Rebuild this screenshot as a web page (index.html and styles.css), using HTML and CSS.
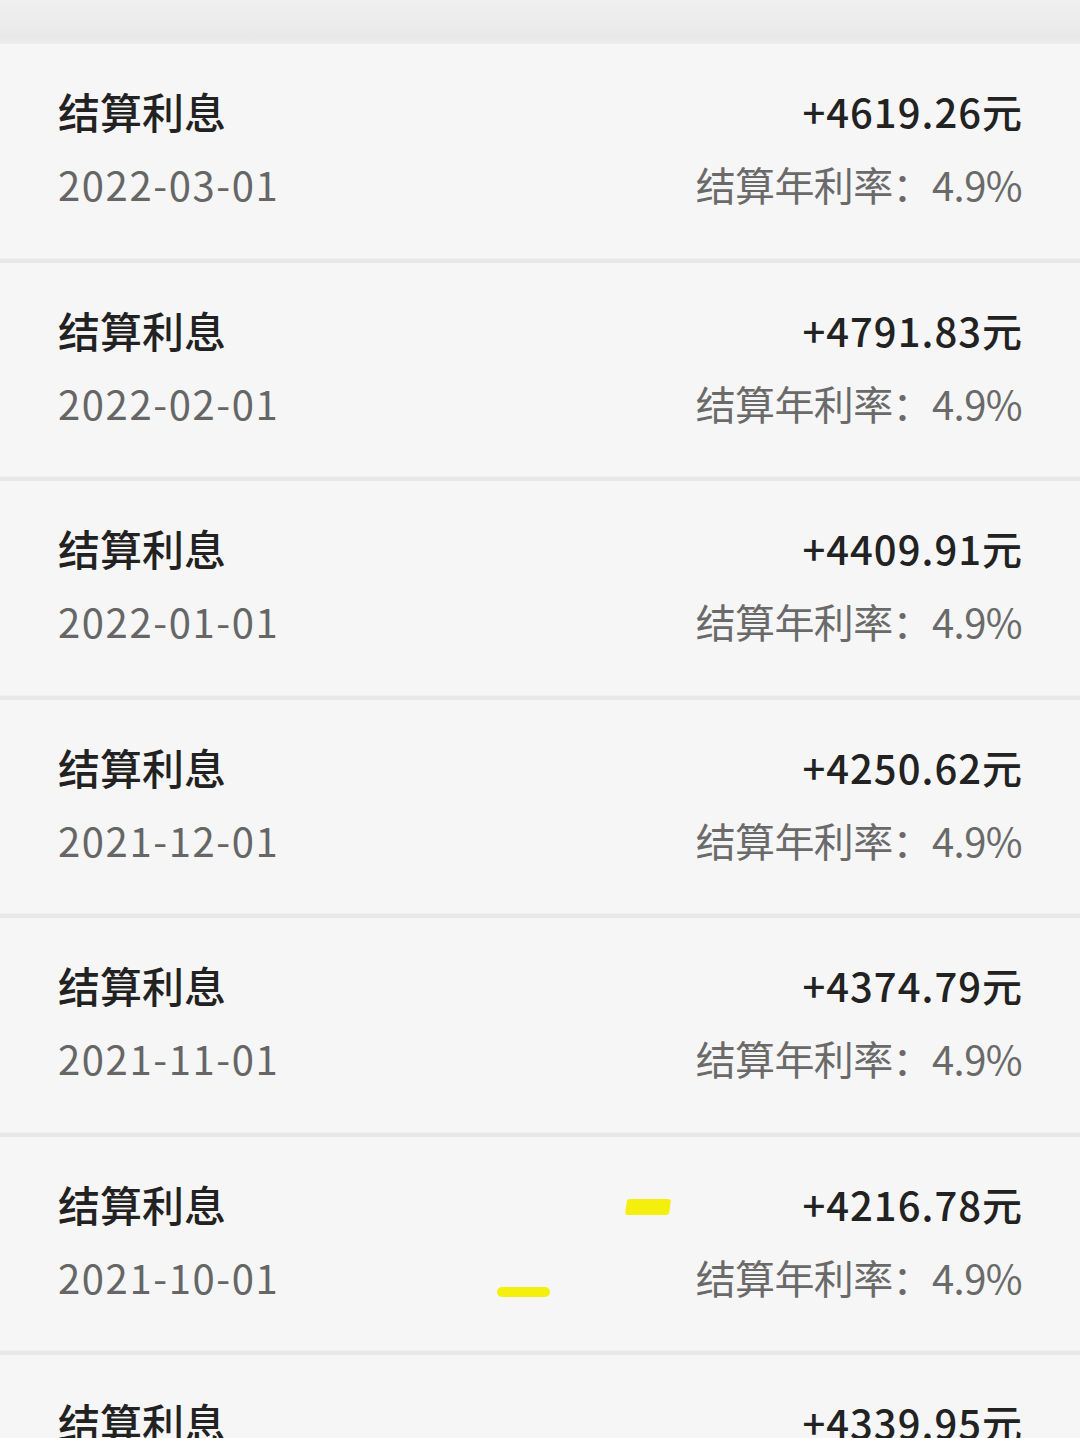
FILE: index.html
```html
<!DOCTYPE html>
<html lang="zh-CN">
<head>
<meta charset="utf-8">
<title>结算利息</title>
<link rel="stylesheet" href="styles.css">
</head>
<body>
<div class="page">
  <div class="topband"></div>
  <ul class="list">
    <li class="row">
      <div class="left"><div class="title">结算利息</div><div class="date">2022-03-01</div></div>
      <div class="right"><div class="amount">+4619.26元</div><div class="rate">结算年利率：4.9%</div></div>
    </li>
    <li class="row">
      <div class="left"><div class="title">结算利息</div><div class="date">2022-02-01</div></div>
      <div class="right"><div class="amount">+4791.83元</div><div class="rate">结算年利率：4.9%</div></div>
    </li>
    <li class="row">
      <div class="left"><div class="title">结算利息</div><div class="date">2022-01-01</div></div>
      <div class="right"><div class="amount">+4409.91元</div><div class="rate">结算年利率：4.9%</div></div>
    </li>
    <li class="row">
      <div class="left"><div class="title">结算利息</div><div class="date">2021-12-01</div></div>
      <div class="right"><div class="amount">+4250.62元</div><div class="rate">结算年利率：4.9%</div></div>
    </li>
    <li class="row">
      <div class="left"><div class="title">结算利息</div><div class="date">2021-11-01</div></div>
      <div class="right"><div class="amount">+4374.79元</div><div class="rate">结算年利率：4.9%</div></div>
    </li>
    <li class="row marked">
      <div class="left"><div class="title">结算利息</div><div class="date">2021-10-01</div></div>
      <div class="right"><div class="amount">+4216.78元</div><div class="rate">结算年利率：4.9%</div></div>
      <span class="mark mark-a"></span>
      <span class="mark mark-b"></span>
    </li>
    <li class="row">
      <div class="left"><div class="title">结算利息</div><div class="date">2021-09-01</div></div>
      <div class="right"><div class="amount">+4339.95元</div><div class="rate">结算年利率：4.9%</div></div>
    </li>
  </ul>
</div>
</body>
</html>
```
FILE: styles.css
```css
html, body {
  margin: 0;
  padding: 0;
  background: #f6f6f6;
}
body {
  width: 1080px;
  height: 1438px;
  overflow: hidden;
  font-family: "Noto Sans CJK SC", "Noto Sans", sans-serif;
}
.page {
  width: 1080px;
}
.topband {
  height: 44px;
  background: linear-gradient(#f0f0f0 0px, #ececec 20px, #e8e8e8 38px, #eeeeee 44px);
}
.list {
  list-style: none;
  margin: 0;
  padding: 0;
}
.row {
  position: relative;
  display: flex;
  justify-content: space-between;
  padding: 39px 58px 46.5px 58px;
  background: #f6f6f6;
  border-bottom: 4px solid #e8e8e8;
  box-shadow: inset 0 -1px 0 #f0f0f0;
}
.left, .right {
  display: flex;
  flex-direction: column;
  gap: 17px;
}
.right {
  align-items: flex-end;
}
.title, .date, .amount, .rate {
  font-size: 40px;
  line-height: 56px;
  white-space: nowrap;
}
.title {
  font-size: 42px;
  color: #222222;
  font-weight: 500;
}
.date {
  color: #666666;
  letter-spacing: 1.6px;
}
.amount {
  color: #222222;
  font-weight: 500;
  letter-spacing: 1px;
  margin-right: -1px;
}
.rate {
  color: #6a6a6a;
  letter-spacing: -0.6px;
}
.mark {
  position: absolute;
  background: #f4ee00;
  border-radius: 3px;
  opacity: 0.95;
}
.mark-a {
  left: 626px;
  top: 62px;
  width: 44px;
  height: 16px;
  transform: skewX(-8deg);
}
.mark-b {
  left: 497px;
  top: 150px;
  width: 53px;
  height: 10px;
  border-radius: 6px;
}
```
